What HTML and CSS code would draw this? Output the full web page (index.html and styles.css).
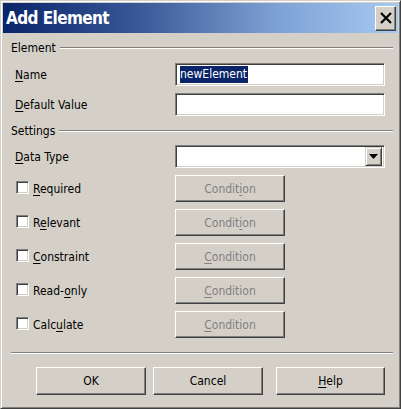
FILE: index.html
```html
<!DOCTYPE html>
<html>
<head>
<meta charset="utf-8">
<link rel="stylesheet" href="styles.css">
</head>
<body>
<div class="window">
  <div class="titlebar">
    <span class="title">Add Element</span>
    <span class="close"><svg width="12" height="12" viewBox="0 0 12 12"><path d="M1 1L11 11M11 1L1 11" stroke="#000" stroke-width="2.2" fill="none"/></svg></span>
  </div>
  <div class="content">
    <div class="group"><span>Element</span><span class="rule"></span></div>
    <div class="row r-name">
      <label class="lbl"><u>N</u>ame</label>
      <div class="field"><span class="sel">newElement</span></div>
    </div>
    <div class="row r-def">
      <label class="lbl"><u>D</u>efault Value</label>
      <div class="field"></div>
    </div>
    <div class="group g2"><span>Settings</span><span class="rule"></span></div>
    <div class="row r-type">
      <label class="lbl"><u>D</u>ata Type</label>
      <div class="field combo"><span class="drop"><svg width="9" height="5" viewBox="0 0 9 5"><path d="M0 0h9L4.5 5z" fill="#000"/></svg></span></div>
    </div>
    <div class="row crow first">
      <label class="chk"><span class="box"></span><span><u>R</u>equired</span></label>
      <button class="btn cond">Condit<u>i</u>on</button>
    </div>
    <div class="row crow">
      <label class="chk"><span class="box"></span><span>R<u>e</u>levant</span></label>
      <button class="btn cond">Condit<u>i</u>on</button>
    </div>
    <div class="row crow">
      <label class="chk"><span class="box"></span><span><u>C</u>onstraint</span></label>
      <button class="btn cond"><u>C</u>ondition</button>
    </div>
    <div class="row crow">
      <label class="chk"><span class="box"></span><span>Read-<u>o</u>nly</span></label>
      <button class="btn cond"><u>C</u>ondition</button>
    </div>
    <div class="row crow">
      <label class="chk"><span class="box"></span><span>Calc<u>u</u>late</span></label>
      <button class="btn cond"><u>C</u>ondition</button>
    </div>
    <div class="sep"></div>
    <div class="actions">
      <button class="btn act ok">OK</button>
      <button class="btn act cancel">Cancel</button>
      <button class="btn act help"><u>H</u>elp</button>
    </div>
  </div>
</div>
</body>
</html>
```

FILE: styles.css
```css
* { box-sizing: border-box; }
html, body { margin: 0; padding: 0; }
body {
  font-family: "DejaVu Sans Condensed", "DejaVu Sans", sans-serif;
  font-size: 12px;
  color: #000;
  background: #d4d0c8;
}
u { text-decoration: underline; text-underline-offset: 2px; }
.window {
  width: 401px;
  height: 409px;
  background: #d4d0c8;
  border-top: 1px solid #d4d0c8;
  border-left: 1px solid #d4d0c8;
  border-right: 1px solid #404040;
  border-bottom: 1px solid #404040;
  box-shadow: inset 1px 1px 0 #fff, inset -1px -1px 0 #808080;
  padding: 2px;
}
.titlebar {
  height: 30px;
  display: flex;
  align-items: center;
  justify-content: space-between;
  padding: 0 2px 0 3px;
  background: linear-gradient(to right, #0a246a 0%, #3a5a98 35%, #7fa2d6 70%, #a6caf0 100%);
}
.title {
  color: #fff;
  font-weight: bold;
  font-size: 17px;
  letter-spacing: -0.6px;
}
.close {
  width: 21px;
  height: 25px;
  display: flex;
  align-items: center;
  justify-content: center;
  background: #d4d0c8;
  border-top: 1px solid #fff;
  border-left: 1px solid #fff;
  border-right: 1px solid #404040;
  border-bottom: 1px solid #404040;
  box-shadow: inset -1px -1px 0 #808080;
}
.content {
  padding: 0 4px 0 8px;
}
.group {
  display: flex;
  align-items: center;
  height: 20px;
  margin-top: 5px;
}
.g2 { margin-top: 5px; }
.rule {
  flex: 1;
  margin-left: 4px;
  margin-right: 1px;
  border-top: 1px solid #808080;
  border-bottom: 1px solid #fff;
}
.row {
  display: flex;
  align-items: center;
}
.r-name { margin-top: 5px; }
.r-def { margin-top: 7px; }
.r-type { margin-top: 4px; }
.lbl {
  width: 164px;
  padding-left: 4px;
}
.field {
  width: 210px;
  height: 23px;
  background: #fff;
  border-top: 1px solid #808080;
  border-left: 1px solid #808080;
  border-right: 1px solid #fff;
  border-bottom: 1px solid #fff;
  box-shadow: inset 1px 1px 0 #404040, inset -1px -1px 0 #d4d0c8;
  display: flex;
  align-items: center;
  padding-left: 4px;
}
.sel {
  background: #0a246a;
  color: #fff;
  line-height: 17px;
  padding-right: 1px;
}
.combo {
  justify-content: flex-end;
  padding: 2px;
}
.drop {
  width: 17px;
  height: 19px;
  display: flex;
  align-items: center;
  justify-content: center;
  background: #d4d0c8;
  border-top: 1px solid #d4d0c8;
  border-left: 1px solid #d4d0c8;
  border-right: 1px solid #404040;
  border-bottom: 1px solid #404040;
  box-shadow: inset 1px 1px 0 #fff, inset -1px -1px 0 #808080;
}
.crow { margin-top: 7px; }
.chk {
  width: 164px;
  padding-left: 5px;
  display: flex;
  align-items: center;
}
.box {
  width: 13px;
  height: 13px;
  background: #fff;
  border-top: 1px solid #808080;
  border-left: 1px solid #808080;
  border-right: 1px solid #fff;
  border-bottom: 1px solid #fff;
  box-shadow: inset 1px 1px 0 #404040, inset -1px -1px 0 #d4d0c8;
  margin-right: 4px;
  margin-top: -2px;
}
.btn {
  font-family: inherit;
  font-size: 12px;
  background: #d4d0c8;
  color: #000;
  padding: 0;
  border-top: 1px solid #fff;
  border-left: 1px solid #fff;
  border-right: 1px solid #404040;
  border-bottom: 1px solid #404040;
  box-shadow: inset -1px -1px 0 #808080;
}
.cond {
  width: 110px;
  height: 27px;
  color: #808080;
}
.sep {
  margin-top: 14px;
  border-top: 1px solid #808080;
  border-bottom: 1px solid #fff;
  margin-right: 1px;
}
.actions {
  display: flex;
  margin-top: 13px;
}
.act {
  width: 110px;
  height: 28px;
}
.ok { margin-left: 25px; }
.cancel { margin-left: 7px; }
.help { margin-left: 13px; width: 109px; }
```
